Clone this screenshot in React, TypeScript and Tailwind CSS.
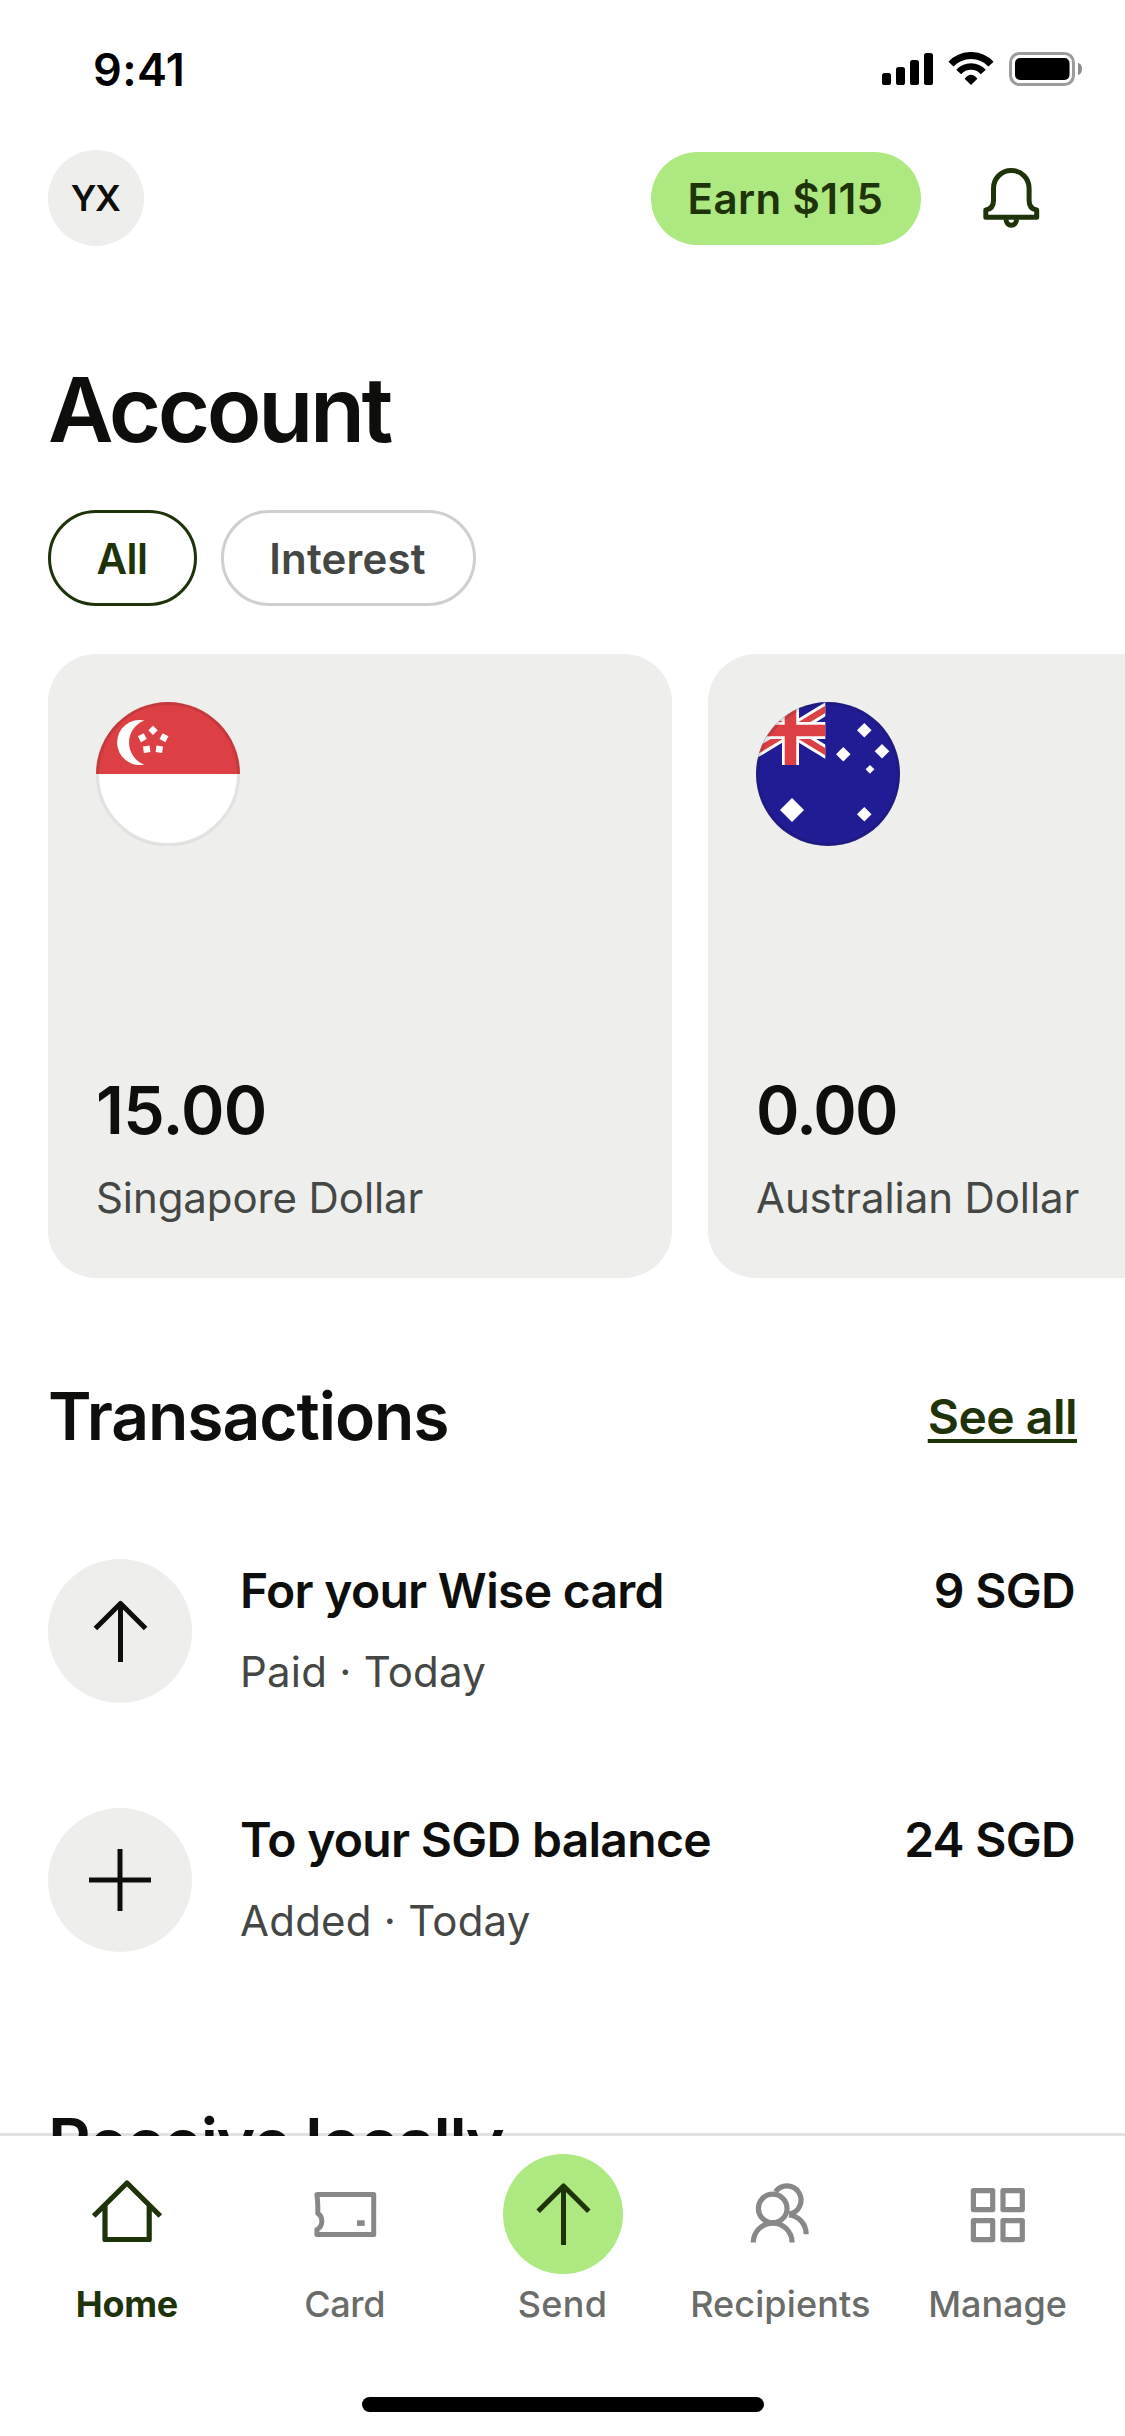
import type { ReactNode } from "react";

function SignalIcon() {
  return (
    <svg width="52" height="34" viewBox="0 0 52 34" fill="#000">
      <rect x="0" y="21" width="9" height="12" rx="2.6" />
      <rect x="14" y="15" width="9" height="18" rx="2.6" />
      <rect x="28" y="8" width="9" height="25" rx="2.6" />
      <rect x="42" y="1" width="9" height="32" rx="2.6" />
    </svg>
  );
}

function WifiIcon() {
  return (
    <svg width="46" height="34" viewBox="0 0 46 34" fill="none" stroke="#000">
      <path d="M3 12.1A27.5 27.5 0 0 1 43 12.1" strokeWidth="7" />
      <path d="M10.7 20A16.5 16.5 0 0 1 35.3 20" strokeWidth="6.7" />
      <path d="M16.6 26.7Q23 18.7 29.4 26.7L23 33Z" fill="#000" stroke="none" />
    </svg>
  );
}

function BatteryIcon() {
  return (
    <svg width="73" height="34" viewBox="0 0 73 34">
      <rect x="1.5" y="1.5" width="63" height="31" rx="9" fill="none" stroke="#9c9c9c" strokeWidth="3" />
      <rect x="6" y="6" width="54.5" height="22" rx="5" fill="#000" />
      <path d="M69 10.7C71.5 11.6 73 14 73 17S71.5 22.4 69 23.3Z" fill="#8c8c8c" />
    </svg>
  );
}

function BellIcon() {
  return (
    <svg width="72" height="72" viewBox="0 0 72 72" fill="none" stroke="#1f330a" strokeWidth="5" strokeLinejoin="round">
      <path d="M18.5 38.5V26.2A17.8 17.8 0 0 1 54.1 26.2V38.5C54.1 44.5 57 47.3 61.7 48V55.2H10.8V48C15.5 47.3 18.5 44.5 18.5 38.5Z" />
      <path d="M31 57.3A5.3 6 0 0 0 41.6 57.3" />
    </svg>
  );
}

const singaporeStars = [
  [57, 28.3, 45],
  [46.3, 35.7, -28],
  [68, 35.7, 28],
  [50.7, 47.3, -8],
  [63.3, 47.3, 8],
];

function SingaporeFlag() {
  return (
    <svg width="144" height="144" viewBox="0 0 144 144">
      <clipPath id="sg">
        <circle cx="72" cy="72" r="72" />
      </clipPath>
      <g clipPath="url(#sg)">
        <rect width="144" height="144" fill="#fff" />
        <rect width="144" height="72" fill="#dc3f44" />
        <path d="M48.3 18.5A22.5 22.5 0 1 0 48.3 62.5A23.5 23.5 0 0 1 48.3 18.5Z" fill="#fff" />
        {singaporeStars.map(([x, y, r]) => (
          <rect key={`${x}-${y}`} x={x - 3.3} y={y - 3.3} width="6.6" height="6.6" transform={`rotate(${r} ${x} ${y})`} fill="#fff" />
        ))}
      </g>
      <circle cx="72" cy="72" r="70.5" fill="none" stroke="#0e0f0c" strokeOpacity="0.12" strokeWidth="3" />
    </svg>
  );
}

const southernCross = [
  [108.3, 28.3, 7.3],
  [87.3, 52.3, 7.3],
  [126, 49.3, 7.3],
  [114, 67.3, 4.4],
  [108.3, 112.3, 7.3],
  [36, 108, 12],
];

function AustraliaFlag() {
  return (
    <svg width="144" height="144" viewBox="0 0 144 144">
      <clipPath id="au">
        <circle cx="72" cy="72" r="72" />
      </clipPath>
      <clipPath id="canton">
        <rect width="69.3" height="63" />
      </clipPath>
      <g clipPath="url(#au)">
        <rect width="144" height="144" fill="#211c93" />
        <g clipPath="url(#canton)">
          <path d="M-10.5 1.1L79.5 55.9M-10.5 55.9L79.5 1.1" stroke="#fff" strokeWidth="12" />
          <path d="M-10.5 1.1L79.5 55.9M-10.5 55.9L79.5 1.1" stroke="#dc3f44" strokeWidth="6.2" />
          <path d="M34.5 0V63M0 28.5H70" stroke="#fff" strokeWidth="17" />
          <path d="M34.5 0V63M0 28.5H70" stroke="#dc3f44" strokeWidth="11.6" />
        </g>
        {southernCross.map(([x, y, r]) => (
          <path key={`${x}-${y}`} d={`M${x} ${y - r}L${x + r} ${y}L${x} ${y + r}L${x - r} ${y}Z`} fill="#fff" />
        ))}
      </g>
      <circle cx="72" cy="72" r="70.5" fill="none" stroke="#0e0f0c" strokeOpacity="0.12" strokeWidth="3" />
    </svg>
  );
}

function ArrowUpIcon() {
  return (
    <svg width="144" height="144" viewBox="0 0 144 144" fill="none" stroke="#0e0f0c" strokeWidth="5" strokeLinejoin="round">
      <path d="M72.5 103V45M47.4 69.5L72.5 44.4L97.6 69.5" />
    </svg>
  );
}

function PlusIcon() {
  return (
    <svg width="144" height="144" viewBox="0 0 144 144" fill="none" stroke="#0e0f0c" strokeWidth="5">
      <path d="M72 41V103M41 72H103" />
    </svg>
  );
}

function HomeIcon() {
  return (
    <svg width="120" height="120" viewBox="0 0 120 120" fill="none" stroke="#1f330a" strokeWidth="5.2" strokeLinejoin="round">
      <path d="M26.7 62L60 29L93.3 62M38 51V85.5H82.2V51" />
    </svg>
  );
}

function CardIcon() {
  return (
    <svg width="120" height="120" viewBox="0 0 120 120" fill="none" stroke="#888" strokeWidth="5" strokeLinejoin="round">
      <path d="M31.9 40.6H88.7V80.6H31.9V75.5C38.3 72.5 38.3 62.5 32.8 59.5C32.8 52 33 47.5 31.9 40.6Z" />
      <rect x="72" y="66.3" width="7.7" height="5.6" fill="#888" stroke="none" />
    </svg>
  );
}

function SendIcon() {
  return (
    <span className="ml-px flex size-[120px] rounded-full bg-[#aee880]">
      <svg width="120" height="120" viewBox="0 0 120 120" fill="none" stroke="#1f330a" strokeWidth="5" strokeLinejoin="round">
        <path d="M60.5 91V33M35.2 57.3L60.5 32L85.8 57.3" />
      </svg>
    </span>
  );
}

function RecipientsIcon() {
  return (
    <svg width="120" height="120" viewBox="0 0 120 120" fill="none" stroke="#888" strokeWidth="5.2">
      <circle cx="52.7" cy="54.4" r="14.3" />
      <path d="M33.3 88.5A19.4 19.4 0 0 1 72.1 88.5" />
      <path d="M55.5 37.8A14.1 14.1 0 1 1 69 60" />
      <path d="M69 61C79 62 86.2 70 86.2 80.3" />
    </svg>
  );
}

function ManageIcon() {
  return (
    <svg width="120" height="120" viewBox="0 0 120 120" fill="none" stroke="#888" strokeWidth="5.2" strokeLinejoin="round">
      <rect x="35.4" y="36.6" width="19.3" height="19" />
      <rect x="65" y="36.6" width="19.3" height="19" />
      <rect x="35.4" y="66.6" width="19.3" height="19" />
      <rect x="65" y="66.6" width="19.3" height="19" />
    </svg>
  );
}

function BalanceCard({ flag, amount, currency }: { flag: ReactNode; amount: ReactNode; currency: string }) {
  return (
    <article className="flex size-[624px] shrink-0 flex-col rounded-[48px] bg-[#eeeeec] px-12 pt-12 pb-[54px]">
      {flag}
      <div className="mt-auto text-[66px] leading-[80px] font-semibold">{amount}</div>
      <div className="mt-[22px] text-[42px] leading-[52px] tracking-[-0.1px] text-[#454745]">{currency}</div>
    </article>
  );
}

function Transaction({ icon, title, detail, amount }: { icon: ReactNode; title: string; detail: string; amount: ReactNode }) {
  return (
    <li className="flex h-36 gap-12">
      <span className="size-36 shrink-0 rounded-full bg-[#eeeeec]">{icon}</span>
      <div className="flex-1">
        <div className="text-5xl leading-[63px] font-semibold tracking-[-0.7px]">{title}</div>
        <div className="mt-[18px] text-[42px] leading-[63px] tracking-[0.23px] text-[#454745]">{detail}</div>
      </div>
      <div className="pr-[2px] text-5xl leading-[63px] font-semibold">{amount}</div>
    </li>
  );
}

const tabs = [
  { icon: <HomeIcon />, label: <span className="font-bold tracking-[-0.3px] text-[#1f330a]">Home</span> },
  { icon: <CardIcon />, label: <span className="tracking-[-0.3px]">Card</span> },
  { icon: <SendIcon />, label: <span className="tracking-[0.3px]">Send</span> },
  { icon: <RecipientsIcon />, label: <span className="tracking-[0.1px]">Recipients</span> },
  { icon: <ManageIcon />, label: <span className="mr-px">Manage</span> },
];

export default function App() {
  return (
    <div className="h-[2436px] w-[1125px] overflow-hidden bg-white font-['Inter',sans-serif] text-[#0e0f0c]">
      <main className="h-[2136px] overflow-hidden shadow-[inset_0_-3px_0_#e2e2e2]">
        <div className="flex h-[138px] items-center justify-between pr-[43px] pl-[93px] text-black">
          <span className="text-[45px] leading-none font-semibold tracking-[0.4px]">9:41</span>
          <div className="flex">
            <SignalIcon />
            <span className="ml-3.5">
              <WifiIcon />
            </span>
            <span className="ml-[15px]">
              <BatteryIcon />
            </span>
          </div>
        </div>

        <header className="flex h-[120px] items-center pr-[78px] pl-12">
          <div className="flex size-24 items-center justify-center rounded-full bg-[#eeeeec] pr-[2px] text-4xl leading-none font-semibold tracking-[-1.5px]">
            YX
          </div>
          <button className="mt-px ml-auto h-[93px] w-[270px] rounded-full bg-[#aee880] pr-px text-[42px] leading-none font-semibold tracking-[0.4px] text-[#1f330a]">
            Earn $115
          </button>
          <button className="ml-[54px]">
            <BellIcon />
          </button>
        </header>

        <h1 className="mt-[98px] pl-12 text-[90px] leading-[108px] font-semibold tracking-[-3.4px]">Account</h1>

        <div className="mt-[46px] flex gap-6 pl-12 text-[42px] leading-none font-semibold">
          <button className="h-24 w-[149px] rounded-full border-3 border-[#1f330a] pt-[2px] pr-px tracking-[-0.5px] text-[#1f330a]">
            All
          </button>
          <button className="h-24 w-[255px] rounded-full border-3 border-[#cfd0cd] pt-[2px] pr-[2px] tracking-[0.2px] text-[#454745]">
            Interest
          </button>
        </div>

        <section className="mt-12 flex gap-9 overflow-hidden pl-12">
          <BalanceCard flag={<SingaporeFlag />} amount={<span className="tracking-[-0.7px]">15.00</span>} currency="Singapore Dollar" />
          <BalanceCard flag={<AustraliaFlag />} amount={<span className="tracking-[-1.8px]">0.00</span>} currency="Australian Dollar" />
        </section>

        <div className="mt-[98px] flex h-20 items-center justify-between px-12">
          <h2 className="text-[66px] leading-[80px] font-semibold tracking-[-1.1px]">Transactions</h2>
          <a className="mt-[2px] text-5xl leading-[58px] font-semibold tracking-[-0.5px] text-[#1f330a] underline decoration-4 underline-offset-[5px]">
            See all
          </a>
        </div>

        <ul className="mt-[103px] flex flex-col gap-[105px] px-12">
          <Transaction
            icon={<ArrowUpIcon />}
            title="For your Wise card"
            detail="Paid · Today"
            amount={<span className="tracking-[-0.7px]">9 SGD</span>}
          />
          <Transaction
            icon={<PlusIcon />}
            title="To your SGD balance"
            detail="Added · Today"
            amount={<span className="tracking-[-0.7px]">24 SGD</span>}
          />
        </ul>

        <h2 className="mt-[150px] pl-12 text-[66px] leading-[80px] font-semibold tracking-[-1.5px]">Receive locally</h2>
      </main>

      <nav className="flex h-[300px] flex-col pt-[18px]">
        <div className="grid grid-cols-5 px-[18px]">
          {tabs.map(({ icon, label }, i) => (
            <div key={i} className="flex flex-col items-center">
              {icon}
              <div className="mt-2 text-4xl leading-[44px] font-medium text-[#6a6c6a]">{label}</div>
            </div>
          ))}
        </div>
        <div className="mt-[71px] ml-[362px] h-[15px] w-[402px] rounded-full bg-black" />
      </nav>
    </div>
  );
}
